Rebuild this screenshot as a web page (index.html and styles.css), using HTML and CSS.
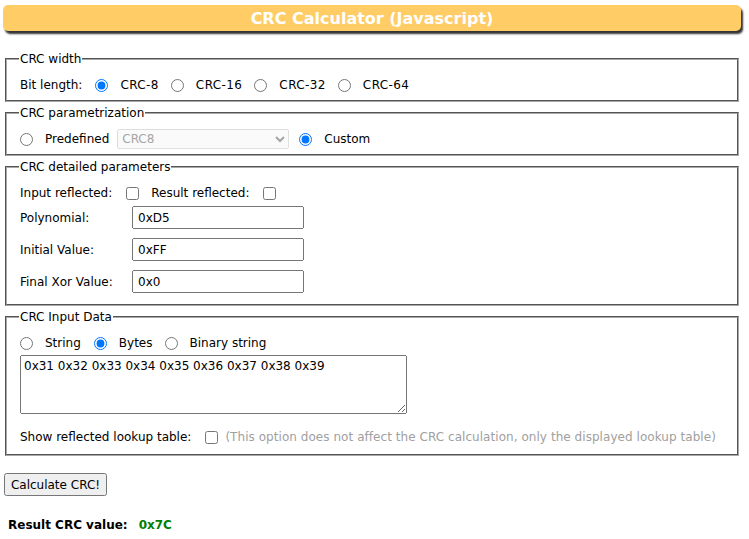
FILE: index.html
```html
<!DOCTYPE html>
<html>
<head>
<meta charset="utf-8">
<link rel="stylesheet" href="styles.css">
</head>
<body>
<h1 class="title">CRC Calculator (Javascript)</h1>

<fieldset class="box">
  <legend>CRC width</legend>
  <div class="row">
    <span class="lbl">Bit length:</span>
    <label class="opt"><input type="radio" name="w" checked><span class="crc">CRC-8</span></label>
    <label class="opt"><input type="radio" name="w"><span class="crc">CRC-16</span></label>
    <label class="opt"><input type="radio" name="w"><span class="crc">CRC-32</span></label>
    <label class="opt"><input type="radio" name="w"><span class="crc">CRC-64</span></label>
  </div>
</fieldset>

<fieldset class="box">
  <legend>CRC parametrization</legend>
  <div class="row">
    <label class="opt first"><input type="radio" name="p"><span>Predefined</span></label>
    <select class="sel" disabled><option>CRC8</option></select>
    <label class="opt"><input type="radio" name="p" checked><span>Custom</span></label>
  </div>
</fieldset>

<fieldset class="box">
  <legend>CRC detailed parameters</legend>
  <div class="row">
    <span class="lbl">Input reflected:</span>
    <input type="checkbox" class="chk">
    <span class="lbl">Result reflected:</span>
    <input type="checkbox" class="chk">
  </div>
  <div class="grid">
    <span class="glbl">Polynomial:</span><input class="txt" type="text" value="0xD5">
    <span class="glbl">Initial Value:</span><input class="txt" type="text" value="0xFF">
    <span class="glbl">Final Xor Value:</span><input class="txt" type="text" value="0x0">
  </div>
</fieldset>

<fieldset class="box">
  <legend>CRC Input Data</legend>
  <div class="row">
    <label class="opt first"><input type="radio" name="d"><span>String</span></label>
    <label class="opt"><input type="radio" name="d" checked><span>Bytes</span></label>
    <label class="opt"><input type="radio" name="d"><span>Binary string</span></label>
  </div>
  <textarea class="area">0x31 0x32 0x33 0x34 0x35 0x36 0x37 0x38 0x39</textarea>
  <div class="row last">
    <span class="lbl">Show reflected lookup table:</span>
    <input type="checkbox" class="chk">
    <span class="note">(This option does not affect the CRC calculation, only the displayed lookup table)</span>
  </div>
</fieldset>

<button class="btn">Calculate CRC!</button>

<div class="result"><span class="rlbl">Result CRC value:</span><span class="rval">0x7C</span></div>
</body>
</html>
```

FILE: styles.css
```css
html, body {
  margin: 0;
  padding: 0;
  background: #fff;
}
body {
  font-family: "DejaVu Sans", Verdana, sans-serif;
  font-size: 12px;
  color: #000;
  padding: 5px 0 0 0;
}
.title {
  margin: 0 0 0 3px;
  width: 738px;
  height: 26px;
  box-sizing: border-box;
  background: #ffcc66;
  border-radius: 5px;
  box-shadow: 2px 3px 2px #333;
  color: #fff;
  font-size: 16px;
  font-weight: bold;
  text-align: center;
  line-height: 28px;
}
.box {
  margin: 21px 0 0 5px;
  width: 734px;
  box-sizing: border-box;
  padding: 8px 13px 4px 13px;
  border: 2px groove #a8a8a8;
}
.box + .box {
  margin-top: 4px;
}
legend {
  padding: 0 1px;
  margin-left: -1px;
  font-size: 12px;
}
.row {
  display: flex;
  align-items: center;
  height: 22px;
}
.lbl { margin-right: 13px; }
.opt {
  display: flex;
  align-items: center;
  margin-right: 12px;
}
.opt.first { margin-right: 13px; }
.opt input {
  margin: 0 12px 0 0;
  width: 13px;
  height: 13px;
}
.crc { letter-spacing: 0.4px; }
.chk {
  margin: 0 12px 0 1px;
  width: 13px;
  height: 13px;
}
.sel {
  width: 172px;
  height: 20px;
  margin: 0 10px 0 -5px;
  font-family: "DejaVu Sans", Verdana, sans-serif;
  font-size: 12px;
}
.grid {
  display: grid;
  grid-template-columns: 112px 172px;
  row-gap: 9px;
  align-items: center;
  margin: 2px 0 7px 0;
}
.txt {
  width: 172px;
  height: 23px;
  box-sizing: border-box;
  font-family: "DejaVu Sans", Verdana, sans-serif;
  font-size: 12px;
  margin: 0;
  padding: 1px 4px;
}
.area {
  display: block;
  width: 387px;
  height: 59px;
  box-sizing: border-box;
  margin: 1px 0 12px 0;
  font-family: "DejaVu Sans", Verdana, sans-serif;
  font-size: 12px;
  padding: 3px 3px;
  resize: both;
}
.last { margin-bottom: 2px; }
.note { color: #a0a0a0; margin-left: -5px; letter-spacing: 0.05px; }
.btn {
  display: block;
  margin: 17px 0 0 4px;
  width: 103px;
  height: 23px;
  font-family: "DejaVu Sans", Verdana, sans-serif;
  font-size: 12px;
  padding: 0;
}
.result {
  margin: 22px 0 0 8px;
  font-weight: bold;
  font-size: 12px;
}
.rval {
  color: #008000;
  margin-left: 11px;
}
```
